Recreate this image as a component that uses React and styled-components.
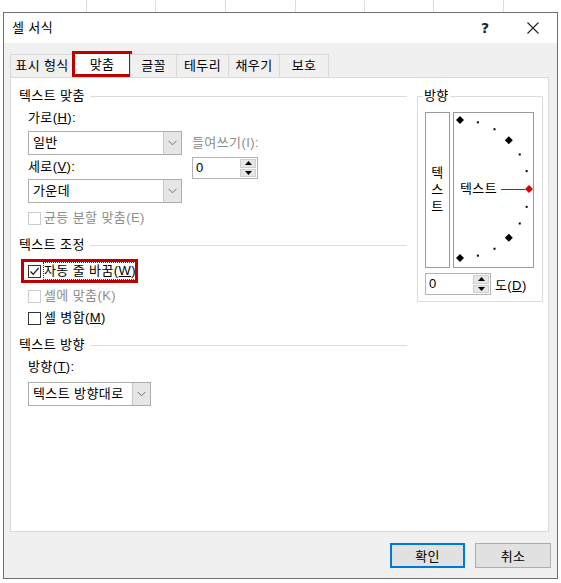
import React from 'react';
import styled, { createGlobalStyle } from 'styled-components';

const Global = createGlobalStyle`
  html, body {
    margin: 0;
    padding: 0;
    background: #ffffff;
  }
  body {
    font-family: "Liberation Sans", "Noto Sans CJK KR", sans-serif;
    font-size: 13px;
    letter-spacing: 0.4px;
    color: #000;
  }
`;

const Page = styled.div`
  width: 561px;
  height: 583px;
  overflow: hidden;
  position: relative;
`;

const Sheet = styled.div`
  display: flex;
  height: 12px;
  padding-left: 18px;
`;

const SheetCell = styled.div`
  width: ${(p) => p.$w}px;
  border-right: 1px solid #dedede;
  flex: none;
`;

const Dialog = styled.div`
  margin-left: 3px;
  width: 553px;
  height: 565px;
  border: 1px solid #6f6f6f;
  background: #f0f0f0;
  display: flex;
  flex-direction: column;
`;

const TitleBar = styled.div`
  height: 30px;
  background: #fff;
  display: flex;
  align-items: center;
  padding-left: 8px;
  padding-right: 18px;
`;

const Title = styled.div`
  flex: 1;
  line-height: 16px;
`;

const Help = styled.div`
  width: 14px;
  margin-right: 32px;
  font-size: 14px;
  font-weight: 600;
  font-family: "DejaVu Sans", sans-serif;
  color: #222;
`;

const Body = styled.div`
  padding: 11px 8px 0 6px;
`;

const TabRow = styled.div`
  display: flex;
  align-items: flex-end;
  height: 23px;
  padding-left: 1px;
  position: relative;
  z-index: 1;
`;

const Tab = styled.div`
  width: ${(p) => p.$w}px;
  height: 23px;
  box-sizing: border-box;
  border: 1px solid #d9d9d9;
  border-bottom: none;
  margin-left: -1px;
  display: flex;
  align-items: center;
  justify-content: center;
  line-height: 16px;
  background: #f0f0f0;
  white-space: nowrap;
`;

const ActiveTab = styled(Tab)`
  height: 26px;
  margin: 0 -1px 0 -2px;
  border: 3px solid #c00000;
  background: #fff;
  padding-top: 1px;
`;

const Panel = styled.div`
  height: 455px;
  box-sizing: border-box;
  background: #fff;
  border: 1px solid #d9d9d9;
  padding: 10px 7px 0 8px;
  display: grid;
  grid-template-columns: 388px 126px;
  column-gap: 10px;
  align-items: start;
`;

const Left = styled.div`
  display: flex;
  flex-direction: column;
`;

const SectionHead = styled.div`
  display: flex;
  align-items: center;
  height: 16px;
  line-height: 16px;
  margin-top: ${(p) => p.$mt || 0}px;
  &::after {
    content: '';
    flex: 1;
    height: 1px;
    background: #dcdcdc;
    margin-left: 5px;
  }
`;

const Indent = styled.div`
  padding-left: 9px;
  display: flex;
  flex-direction: column;
`;

const Label = styled.div`
  height: 16px;
  line-height: 16px;
  margin-top: ${(p) => p.$mt || 0}px;
  color: ${(p) => (p.$disabled ? '#8d8d8d' : '#000')};
  white-space: nowrap;
`;

const Row = styled.div`
  display: flex;
  gap: 10px;
  margin-top: ${(p) => p.$mt || 0}px;
`;

const Col = styled.div`
  display: flex;
  flex-direction: column;
  padding-top: ${(p) => p.$pt || 0}px;
`;

const SelectBox = styled.div`
  width: ${(p) => p.$w}px;
  height: 24px;
  box-sizing: border-box;
  border: 1px solid #adadad;
  display: flex;
  margin-top: ${(p) => p.$mt || 0}px;
  background: #fff;
`;

const SelectValue = styled.div`
  flex: 1;
  padding-left: 4px;
  line-height: 22px;
  white-space: nowrap;
  overflow: hidden;
`;

const SelectButton = styled.div`
  width: 17px;
  flex: none;
  border-left: 1px solid #c8c8c8;
  background: #e6e6e6;
  display: flex;
  align-items: center;
  justify-content: center;
`;

const Spin = styled.div`
  width: ${(p) => p.$w}px;
  height: 22px;
  box-sizing: border-box;
  border: 1px solid #b4b4b4;
  display: flex;
  align-items: center;
  background: #fff;
  margin-top: ${(p) => p.$mt || 0}px;
  padding-right: 1px;
`;

const SpinValue = styled.div`
  flex: 1;
  padding-left: 3px;
  line-height: 18px;
`;

const SpinButtons = styled.div`
  width: 16px;
  height: 18px;
  display: flex;
  flex-direction: column;
  gap: 1px;
`;

const SpinBtn = styled.div`
  flex: 1;
  background: #e6e6e6;
  border: 1px solid #cfcfcf;
  display: flex;
  align-items: center;
  justify-content: center;
`;

const CheckRow = styled.div`
  display: flex;
  align-items: center;
  gap: 3px;
  height: 16px;
  line-height: 16px;
  margin-top: ${(p) => p.$mt || 0}px;
  color: ${(p) => (p.$disabled ? '#8d8d8d' : '#000')};
  white-space: nowrap;
`;

const CheckText = styled.span`
  outline: ${(p) => (p.$focus ? '1px dotted #333' : 'none')};
  padding-right: ${(p) => (p.$focus ? 1 : 0)}px;
`;

const Box = styled.div`
  width: 13px;
  height: 13px;
  box-sizing: border-box;
  border: 1px solid ${(p) => (p.$disabled ? '#cccccc' : '#333333')};
  background: #fff;
  display: flex;
  align-items: center;
  justify-content: center;
  flex: none;
`;

const Highlight = styled.div`
  width: 117px;
  height: 24px;
  box-sizing: border-box;
  border: 3px solid #c00000;
  margin: 6px 0 0 -7px;
  padding-left: 4px;
  display: flex;
  align-items: center;
  overflow: hidden;
`;

const Group = styled.div`
  margin-top: 8px;
  border: 1px solid #dcdcdc;
  padding: 0 7px 6px 7px;
  display: flex;
  flex-direction: column;
`;

const Legend = styled.div`
  margin: -9px 0 0 -2px;
  padding: 0 1px;
  background: #fff;
  align-self: flex-start;
  line-height: 16px;
`;

const OrientRow = styled.div`
  display: flex;
  gap: 3px;
  margin-top: 8px;
`;

const VerticalBox = styled.div`
  width: 25px;
  height: 156px;
  box-sizing: border-box;
  border: 1px solid #9a9a9a;
  display: flex;
  flex-direction: column;
  align-items: center;
  justify-content: center;
  padding-bottom: 2px;
  line-height: 17px;
`;

const Dial = styled.div`
  width: 81px;
  height: 156px;
  box-sizing: border-box;
  border: 1px solid #9a9a9a;
  position: relative;
`;

const DialText = styled.span`
  position: absolute;
  left: 6px;
  top: 68px;
  line-height: 16px;
`;

const DegreeRow = styled.div`
  display: flex;
  align-items: center;
  gap: 4px;
  margin-top: 5px;
`;

const Footer = styled.div`
  display: flex;
  justify-content: flex-end;
  gap: 10px;
  padding: 11px 6px 0 0;
`;

const Button = styled.div`
  width: ${(p) => p.$w}px;
  height: 25px;
  box-sizing: border-box;
  background: #e1e1e1;
  border: ${(p) => (p.$primary ? '2px solid #0078d7' : '1px solid #adadad')};
  display: flex;
  align-items: center;
  justify-content: center;
`;

const Chevron = () => (
  <svg width="9" height="6" viewBox="0 0 9 6">
    <path d="M0.5 0.8 L4.5 4.8 L8.5 0.8" fill="none" stroke="#707070" strokeWidth="1" />
  </svg>
);

const Arrow = ({ down }) => (
  <svg width="7" height="4" viewBox="0 0 7 4">
    <path d={down ? 'M0 0 L7 0 L3.5 4 Z' : 'M0 4 L7 4 L3.5 0 Z'} fill="#000" />
  </svg>
);

const Check = () => (
  <svg width="11" height="11" viewBox="0 0 11 11">
    <path d="M1.5 5.5 L4.2 8.3 L9.6 2" fill="none" stroke="#222" strokeWidth="1.3" />
  </svg>
);

const Close = () => (
  <svg width="12" height="12" viewBox="0 0 12 12">
    <path d="M0.5 0.5 L11.5 11.5 M11.5 0.5 L0.5 11.5" stroke="#222" strokeWidth="1.1" />
  </svg>
);

const Select = ({ w, mt, children }) => (
  <SelectBox $w={w} $mt={mt}>
    <SelectValue>{children}</SelectValue>
    <SelectButton>
      <Chevron />
    </SelectButton>
  </SelectBox>
);

const Spinner = ({ w, mt }) => (
  <Spin $w={w} $mt={mt}>
    <SpinValue>0</SpinValue>
    <SpinButtons>
      <SpinBtn>
        <Arrow />
      </SpinBtn>
      <SpinBtn>
        <Arrow down />
      </SpinBtn>
    </SpinButtons>
  </Spin>
);

// semicircle of angle marks, centre at (6,76) inside the dial, radius 69
function DialMarks() {
  const cx = 6;
  const cy = 76;
  const r = 69;
  const marks = [];
  for (let a = -90; a <= 90; a += 15) {
    if (a === 0) continue;
    const rad = (a * Math.PI) / 180;
    const x = cx + r * Math.cos(rad);
    const y = cy - r * Math.sin(rad);
    if (a % 45 === 0) {
      marks.push(
        <path key={a} d={`M${x} ${y - 4} L${x + 4} ${y} L${x} ${y + 4} L${x - 4} ${y} Z`} fill="#000" />
      );
    } else {
      marks.push(<rect key={a} x={x - 1} y={y - 1} width="2" height="2" fill="#000" />);
    }
  }
  return (
    <svg width="79" height="154" viewBox="0 0 79 154" style={{ display: 'block' }}>
      {marks}
      <line x1="47" y1="76.5" x2="71" y2="76.5" stroke="#444" strokeWidth="1" />
      <path d="M75 72 L79 76 L75 80 L71 76 Z" fill="#e00000" />
    </svg>
  );
}

const sheetCols = [68, 68, 69, 69, 68, 68, 69];

export default function App() {
  return (
    <Page>
      <Global />
      <Sheet>
        {sheetCols.map((w, i) => (
          <SheetCell key={i} $w={w} />
        ))}
      </Sheet>
      <Dialog>
        <TitleBar>
          <Title>셀 서식</Title>
          <Help>?</Help>
          <Close />
        </TitleBar>
        <Body>
          <TabRow>
            <Tab $w={64}>표시 형식</Tab>
            <ActiveTab $w={60}>맞춤</ActiveTab>
            <Tab $w={47}>글꼴</Tab>
            <Tab $w={53}>테두리</Tab>
            <Tab $w={52}>채우기</Tab>
            <Tab $w={50}>보호</Tab>
          </TabRow>
          <Panel>
            <Left>
              <SectionHead>텍스트 맞춤</SectionHead>
              <Indent>
                <Label $mt={6}>
                  가로(<u>H</u>):
                </Label>
                <Row $mt={5}>
                  <Col>
                    <Select w={154}>일반</Select>
                    <Label $mt={4}>
                      세로(<u>V</u>):
                    </Label>
                    <Select w={154} mt={4}>
                      가운데
                    </Select>
                  </Col>
                  <Col $pt={4}>
                    <Label $disabled>들여쓰기(I):</Label>
                    <Spinner w={66} mt={6} />
                  </Col>
                </Row>
                <CheckRow $disabled $mt={7}>
                  <Box $disabled />
                  <CheckText>균등 분할 맞춤(E)</CheckText>
                </CheckRow>
              </Indent>
              <SectionHead $mt={11}>텍스트 조정</SectionHead>
              <Indent>
                <Highlight>
                  <CheckRow>
                    <Box>
                      <Check />
                    </Box>
                    <CheckText $focus>
                      자동 줄 바꿈(<u>W</u>)
                    </CheckText>
                  </CheckRow>
                </Highlight>
                <CheckRow $disabled $mt={5}>
                  <Box $disabled />
                  <CheckText>셀에 맞춤(K)</CheckText>
                </CheckRow>
                <CheckRow $mt={6}>
                  <Box />
                  <CheckText>
                    셀 병합(<u>M</u>)
                  </CheckText>
                </CheckRow>
              </Indent>
              <SectionHead $mt={11}>텍스트 방향</SectionHead>
              <Indent>
                <Label $mt={6}>
                  방향(<u>T</u>):
                </Label>
                <Select w={123} mt={7}>
                  텍스트 방향대로
                </Select>
              </Indent>
            </Left>
            <Group>
              <Legend>방향</Legend>
              <OrientRow>
                <VerticalBox>
                  <span>텍</span>
                  <span>스</span>
                  <span>트</span>
                </VerticalBox>
                <Dial>
                  <DialMarks />
                  <DialText>텍스트</DialText>
                </Dial>
              </OrientRow>
              <DegreeRow>
                <Spinner w={66} />
                <span>
                  도(<u>D</u>)
                </span>
              </DegreeRow>
            </Group>
          </Panel>
        </Body>
        <Footer>
          <Button $w={75} $primary>
            확인
          </Button>
          <Button $w={76}>취소</Button>
        </Footer>
      </Dialog>
    </Page>
  );
}
